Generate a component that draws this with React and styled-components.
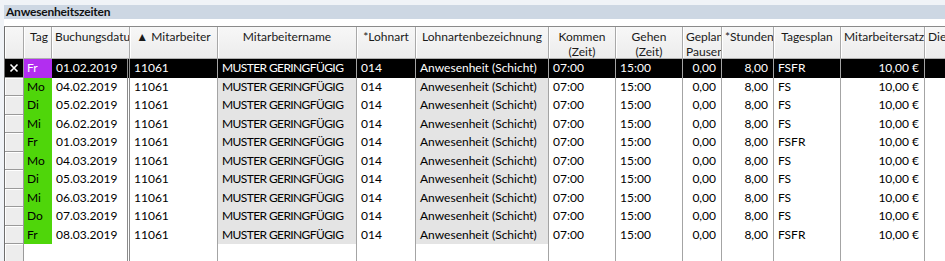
import React from 'react';
import styled, { createGlobalStyle } from 'styled-components';

const GlobalStyle = createGlobalStyle`
  html, body {
    margin: 0;
    padding: 0;
    background: #f0f3f7;
    overflow: hidden;
  }
  body {
    font-family: Lato, "Noto Sans", sans-serif;
    font-size: 12px;
    color: #000;
  }
`;

const COLS = '19px 28px 78px 88px 139px 59px 133px 67px 67px 39px 52px 67px 84px 40px';

const Page = styled.div`
  width: 945px;
  height: 261px;
  padding-top: 5px;
  box-sizing: border-box;
  overflow: hidden;
`;

const TitleBar = styled.div`
  margin-left: 4px;
  height: 14px;
  background: #cdd7e3;
  display: flex;
  align-items: center;
  padding-left: 2px;
  font-weight: 700;
  font-size: 12px;
  letter-spacing: -0.2px;
  line-height: 14px;
  color: #111;
`;

const Spacer = styled.div`
  height: 7px;
  background: #ffffff;
  margin-left: 4px;
`;

const Grid = styled.div`
  background: #ffffff;
  display: flex;
  flex-direction: column;
  border-left: 1px solid #6e6e6e;
  border-top: 1px solid #8a8a8a;
  margin-left: 4px;
`;

const HeaderRow = styled.div`
  display: grid;
  grid-template-columns: ${COLS};
  height: 31px;
  background: linear-gradient(#f7f7f7, #ececec);
  border-bottom: 1px solid #b0b0b0;
`;

const HeadCell = styled.div`
  box-sizing: border-box;
  border-right: 1px solid #a8a8a8;
  box-shadow: inset 1px 0 0 #ffffff;
  text-align: ${p => p.$align || 'center'};
  padding: 2px 3px 0 3px;
  line-height: 15px;
  white-space: pre;
  overflow: hidden;
  color: #1a1a1a;
`;

const Row = styled.div`
  display: grid;
  grid-template-columns: ${COLS};
  height: 18.5px;
  background: ${p => (p.$selected ? '#000' : '#fff')};
  color: ${p => (p.$selected ? '#fff' : '#000')};
`;

const RowHeader = styled.div`
  box-sizing: border-box;
  background: ${p => (p.$selected ? '#000' : '#ededed')};
  border-right: 1px solid #9a9a9a;
  border-bottom: 1px solid #9a9a9a;
  box-shadow: ${p => (p.$selected ? 'none' : 'inset 1px 1px 0 #ffffff')};
  display: flex;
  align-items: center;
  justify-content: center;
  color: #fff;
`;

const TagCell = styled.div`
  box-sizing: border-box;
  background: ${p => p.$color};
  color: ${p => (p.$light ? '#fff' : '#000')};
  padding-left: 3px;
  line-height: 18px;
  border-right: 1px solid ${p => p.$color};
`;

const Cell = styled.div`
  box-sizing: border-box;
  padding: 0 ${p => (p.$align === 'right' ? '5px' : '0')} 0 ${p => (p.$align === 'right' ? '0' : '4px')};
  text-align: ${p => p.$align || 'left'};
  letter-spacing: ${p => (p.$caps ? '-0.6px' : '0')};
  line-height: 18px;
  white-space: nowrap;
  overflow: hidden;
  background: ${p => (p.$selected ? '#000' : p.$readonly ? '#e4e4e4' : 'transparent')};
  border-right: ${p => (p.$frozen ? '3px double #8c8c8c' : '1px solid #a4a4a4')};
`;

const EmptyRow = styled(Row)`
  height: 20px;
`;

const PURPLE = '#b22ef0';
const GREEN = '#4fd60a';

const rows = [
  { tag: 'Fr', date: '01.02.2019', plan: 'FSFR', selected: true },
  { tag: 'Mo', date: '04.02.2019', plan: 'FS' },
  { tag: 'Di', date: '05.02.2019', plan: 'FS' },
  { tag: 'Mi', date: '06.02.2019', plan: 'FS' },
  { tag: 'Fr', date: '01.03.2019', plan: 'FSFR' },
  { tag: 'Mo', date: '04.03.2019', plan: 'FS' },
  { tag: 'Di', date: '05.03.2019', plan: 'FS' },
  { tag: 'Mi', date: '06.03.2019', plan: 'FS' },
  { tag: 'Do', date: '07.03.2019', plan: 'FS' },
  { tag: 'Fr', date: '08.03.2019', plan: 'FSFR' },
];

const headers = [
  { label: '' },
  { label: 'Tag', align: 'right' },
  { label: 'Buchungsdatum', align: 'left' },
  { label: '▲ Mitarbeiter' },
  { label: 'Mitarbeitername' },
  { label: '*Lohnart' },
  { label: 'Lohnartenbezeichnung' },
  { label: 'Kommen\n(Zeit)' },
  { label: 'Gehen\n(Zeit)' },
  { label: 'Geplante\nPausen', align: 'left' },
  { label: '*Stunden', align: 'left' },
  { label: 'Tagesplan' },
  { label: 'Mitarbeitersatz' },
  { label: 'Dienst', align: 'left' },
];

const CloseMark = () => (
  <svg width="10" height="10" viewBox="0 0 10 10">
    <path d="M1.5 1.5 L8.5 8.5 M8.5 1.5 L1.5 8.5" stroke="#fff" strokeWidth="1.6" />
  </svg>
);

export default function App() {
  return (
    <Page>
      <GlobalStyle />
      <TitleBar>Anwesenheitszeiten</TitleBar>
      <Spacer />
      <Grid>
        <HeaderRow>
          {headers.map((h, i) => (
            <HeadCell key={i} $align={h.align}>{h.label}</HeadCell>
          ))}
        </HeaderRow>
        {rows.map((r, i) => {
          const s = r.selected;
          return (
            <Row key={i} $selected={s}>
              <RowHeader $selected={s}>{s && <CloseMark />}</RowHeader>
              <TagCell $color={s ? PURPLE : GREEN} $light={s}>{r.tag}</TagCell>
              <Cell $selected={s} $frozen>{r.date}</Cell>
              <Cell $selected={s}>11061</Cell>
              <Cell $selected={s} $readonly $caps>MUSTER GERINGFÜGIG</Cell>
              <Cell $selected={s}>014</Cell>
              <Cell $selected={s} $readonly>Anwesenheit (Schicht)</Cell>
              <Cell $selected={s}>07:00</Cell>
              <Cell $selected={s}>15:00</Cell>
              <Cell $selected={s} $align="right">0,00</Cell>
              <Cell $selected={s} $align="right">8,00</Cell>
              <Cell $selected={s}>{r.plan}</Cell>
              <Cell $selected={s} $align="right">10,00 €</Cell>
              <Cell $selected={s} />
            </Row>
          );
        })}
        <EmptyRow>
          <RowHeader />
          <TagCell $color="#fff" />
          <Cell $frozen />
          <Cell />
          <Cell />
          <Cell />
          <Cell />
          <Cell />
          <Cell />
          <Cell />
          <Cell />
          <Cell />
          <Cell />
          <Cell />
        </EmptyRow>
      </Grid>
    </Page>
  );
}
